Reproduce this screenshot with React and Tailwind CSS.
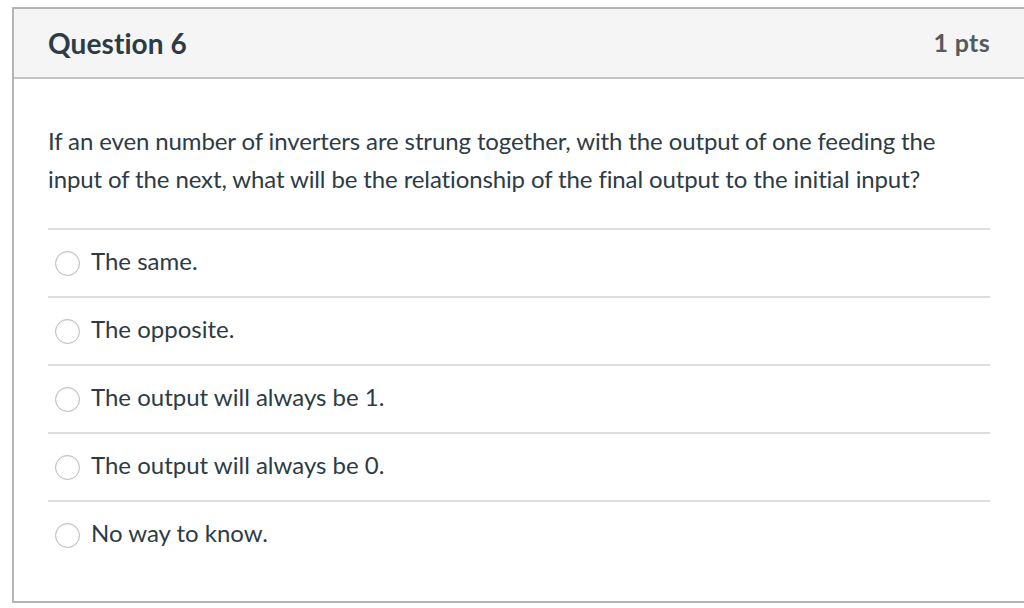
const answers = [
  'The same.',
  'The opposite.',
  'The output will always be 1.',
  'The output will always be 0.',
  'No way to know.',
];

export default function App() {
  return (
    <div className="w-[1024px] h-[608px] bg-white overflow-hidden pt-[7px] pl-[12px]" style={{ fontFamily: 'Lato, "Open Sans", sans-serif' }}>
      <div className="w-[1040px] h-[596px] border-2 border-[#b4b4b4] flex flex-col">
        <div className="h-[70px] shrink-0 bg-[#f5f5f5] border-b-2 border-[#c4c4c4] flex items-center pl-[34px]">
          <div className="w-[942px] flex items-center justify-between">
            <h2 className="text-[28px] font-bold text-[#2d3b45] tracking-[0.1px]">Question 6</h2>
            <span className="text-[25px] font-bold text-[#555a5e] tracking-[0.3px]">1 pts</span>
          </div>
        </div>
        <div className="pl-[34px] pt-[43px]">
          <p className="text-[24px] leading-[38px] tracking-[-0.12px] text-[#2d3b45] w-[942px]">
            If an even number of inverters are strung together, with the output of one feeding the input of the next, what will be the relationship of the final output to the initial input?
          </p>
          <div className="mt-[30px] w-[942px]">
            {answers.map((a) => (
              <div key={a} className="h-[68px] border-t-2 border-[#dedede] flex items-center pl-[7px] gap-[11px]">
                <span className="w-[25px] h-[25px] rounded-full border border-[#b9b9b9] bg-white shadow-[inset_0_1px_2px_rgba(0,0,0,0.08)]" />
                <span className="text-[24px] text-[#2d3b45] -mt-[4px]">{a}</span>
              </div>
            ))}
          </div>
        </div>
      </div>
    </div>
  );
}
